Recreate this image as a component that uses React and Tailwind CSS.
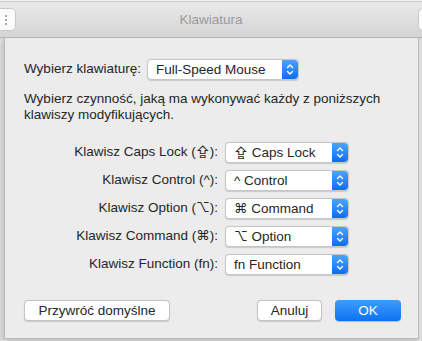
import React from 'react';

const font = { fontFamily: '"Liberation Sans", Inter, Arial, sans-serif' };

const Arrows = () => (
  <span className="flex h-full w-[16px] shrink-0 items-center justify-center rounded-r-[4px] bg-gradient-to-b from-[#4aa3ff] to-[#0a6cf0]">
    <svg width="8" height="13" viewBox="0 0 8 13" fill="none" stroke="white" strokeWidth="1.4" strokeLinecap="round" strokeLinejoin="round">
      <path d="M1.5 4.5 L4 2 L6.5 4.5" />
      <path d="M1.5 8.5 L4 11 L6.5 8.5" />
    </svg>
  </span>
);

const Popup = ({ label, className = '' }) => (
  <div className={`flex h-[21px] items-center rounded-[4px] border border-[#c6c6c6] bg-white shadow-[0_0.5px_1px_rgba(0,0,0,0.15)] ${className}`}>
    <span className="flex-1 whitespace-nowrap pl-[8px] text-[13.5px] leading-none text-[#262626]">{label}</span>
    <Arrows />
  </div>
);

const Button = ({ children, className = '' }) => (
  <button className={`flex h-[21px] items-center justify-center rounded-[4px] border border-[#c4c4c4] bg-white text-[13.5px] leading-none text-[#262626] shadow-[0_0.5px_1px_rgba(0,0,0,0.15)] ${className}`}>
    {children}
  </button>
);

const rows = [
  { key: 'Klawisz Caps Lock (⇪):', value: '⇪ Caps Lock' },
  { key: 'Klawisz Control (^):', value: '^ Control' },
  { key: 'Klawisz Option (⌥):', value: '⌘ Command' },
  { key: 'Klawisz Command (⌘):', value: '⌥ Option' },
  { key: 'Klawisz Function (fn):', value: 'fn Function' },
];

export default function App() {
  return (
    <div className="relative flex h-[341px] w-[422px] flex-col overflow-hidden bg-[#e4e4e4]" style={font}>
      {/* strip of the window behind */}
      <div className="h-[2px] shrink-0 border-b border-[#c9c9c9] bg-[#f4f4f4]" />

      {/* title bar */}
      <div className="relative flex h-[36px] shrink-0 items-center justify-center border-b border-[#b3b3b3] bg-gradient-to-b from-[#e9e9e9] to-[#d4d4d4]">
        <span className="pt-[2px] text-[13.5px] text-[#9b9b9b]">Klawiatura</span>
        <div className="absolute left-[-6px] top-[6px] flex h-[23px] w-[22px] items-center justify-end rounded-[5px] border border-[#c8c8c8] bg-[#fbfbfb] pr-[8px]">
          <span className="flex flex-col gap-[2px]">
            <span className="h-[2px] w-[2px] rounded-full bg-[#8a8a8a]" />
            <span className="h-[2px] w-[2px] rounded-full bg-[#8a8a8a]" />
            <span className="h-[2px] w-[2px] rounded-full bg-[#8a8a8a]" />
          </span>
        </div>
        <div className="absolute right-[-20px] top-[6px] h-[23px] w-[24px] rounded-[5px] border border-[#c8c8c8] bg-[#fbfbfb]" />
      </div>

      <div className="flex flex-1">
        <div className="w-[4px] shrink-0 bg-[#dcdcdc]" />

        {/* sheet */}
        <div className="flex h-[301px] flex-1 flex-col border-x border-b border-[#b9b9b9] bg-[#ececec] px-[19px] pt-[21px] shadow-[0_2px_6px_rgba(0,0,0,0.2)]">
          <div className="flex items-center gap-[6px]">
            <span className="text-[13.5px] text-[#262626]">Wybierz klawiaturę:</span>
            <Popup label="Full-Speed Mouse" className="w-[152px]" />
          </div>

          <p className="mt-[11px] text-[13.5px] leading-[16px] text-[#262626]">
            Wybierz czynność, jaką ma wykonywać każdy z poniższych<br />
            klawiszy modyfikujących.
          </p>

          <div className="mt-[19px] grid grid-cols-[194px_124px] gap-x-[7px] gap-y-[7px]">
            {rows.map((r) => (
              <React.Fragment key={r.key}>
                <span className="self-center whitespace-nowrap text-right text-[13.5px] text-[#262626]">{r.key}</span>
                <Popup label={r.value} />
              </React.Fragment>
            ))}
          </div>

          <div className="mt-[25px] flex items-center">
            <Button className="w-[146px]">Przywróć domyślne</Button>
            <div className="flex-1" />
            <Button className="w-[65px]">Anuluj</Button>
            <button className="ml-[13px] mr-[-2px] flex h-[21px] w-[66px] items-center justify-center rounded-[4px] bg-gradient-to-b from-[#3d9dfe] to-[#0a72f0] text-[13.5px] leading-none text-white shadow-[0_0.5px_1px_rgba(0,0,0,0.2)]">
              OK
            </button>
          </div>
        </div>

        <div className="w-[3px] shrink-0 bg-[#dcdcdc]" />
      </div>
    </div>
  );
}
